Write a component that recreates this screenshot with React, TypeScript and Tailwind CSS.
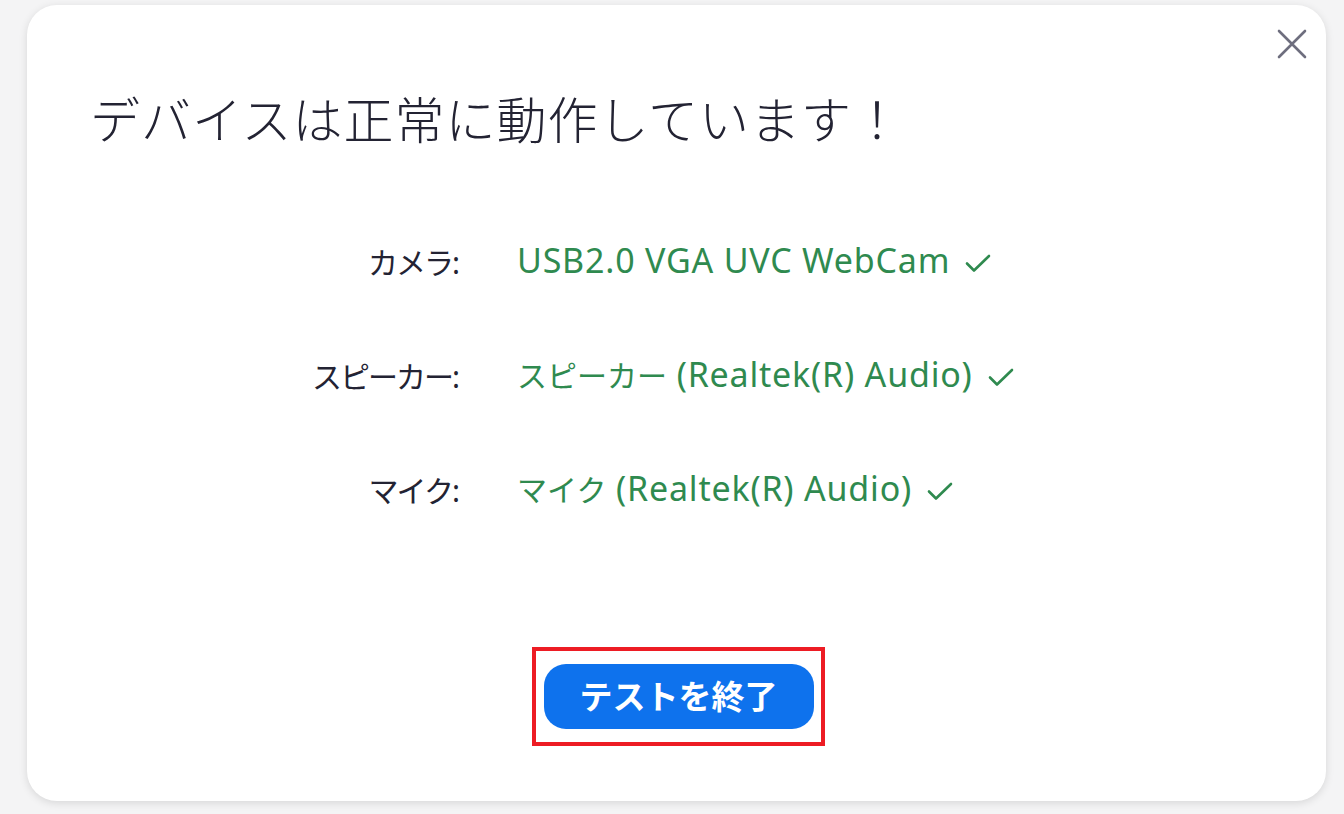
const rows = [
  { label: "カメラ:", jp: "", en: "USB2.0 VGA UVC WebCam" },
  { label: "スピーカー:", jp: "スピーカー", en: " (Realtek(R) Audio)" },
  { label: "マイク:", jp: "マイク", en: " (Realtek(R) Audio)" },
];

function Check() {
  return (
    <svg width="28" height="24" viewBox="0 0 28 24" fill="none" className="shrink-0">
      <path d="M3 12.5 L10 19.5 L25 5" stroke="#2f8a4f" strokeWidth="2.6" strokeLinecap="round" strokeLinejoin="round" />
    </svg>
  );
}

export default function App() {
  return (
    <div
      className="w-[1344px] h-[814px] bg-[#f4f4f5] pt-[5px] pl-[27px]"
      style={{ fontFamily: '"Noto Sans", "Noto Sans CJK JP", sans-serif' }}
    >
      <div className="relative w-[1299px] h-[796px] bg-white rounded-[30px] shadow-[0_2px_8px_rgba(0,0,0,0.12)] flex flex-col pl-[63px]">
        <button className="absolute right-[19px] top-[24px]">
          <svg width="30" height="30" viewBox="0 0 30 30" fill="none">
            <path d="M2 2 L28 28 M28 2 L2 28" stroke="#6e6e7e" strokeWidth="2.6" strokeLinecap="round" />
          </svg>
        </button>

        <h1 className="mt-[90px] text-[50px] leading-[50px] text-[#232333] font-light tracking-[1px]">
          デバイスは正常に動作しています！
        </h1>

        <div className="mt-[98px] flex flex-col gap-[74px]">
          {rows.map((r) => (
            <div key={r.label} className="flex items-center h-[40px]">
              <div className="w-[368px] text-right text-[30px] leading-[40px] text-[#232333] tracking-[-2px]">
                {r.label}
              </div>
              <div className="ml-[59px] flex items-center gap-[14px] leading-[40px] text-[#2f8a4f]">
                <span className="whitespace-pre">
                  {r.jp ? <span className="text-[30px]">{r.jp}</span> : null}
                  <span className="text-[34px] tracking-[0.8px]">{r.en}</span>
                </span>
                <Check />
              </div>
            </div>
          ))}
        </div>

        <div className="mt-[136px] ml-[442px] w-[293px] h-[99px] border-[4px] border-[#ed1c24] flex items-center justify-center">
          <button className="w-[270px] h-[65px] rounded-[22px] bg-[#0e72ed] text-white text-[33px] font-bold leading-none">
            テストを終了
          </button>
        </div>
      </div>
    </div>
  );
}
